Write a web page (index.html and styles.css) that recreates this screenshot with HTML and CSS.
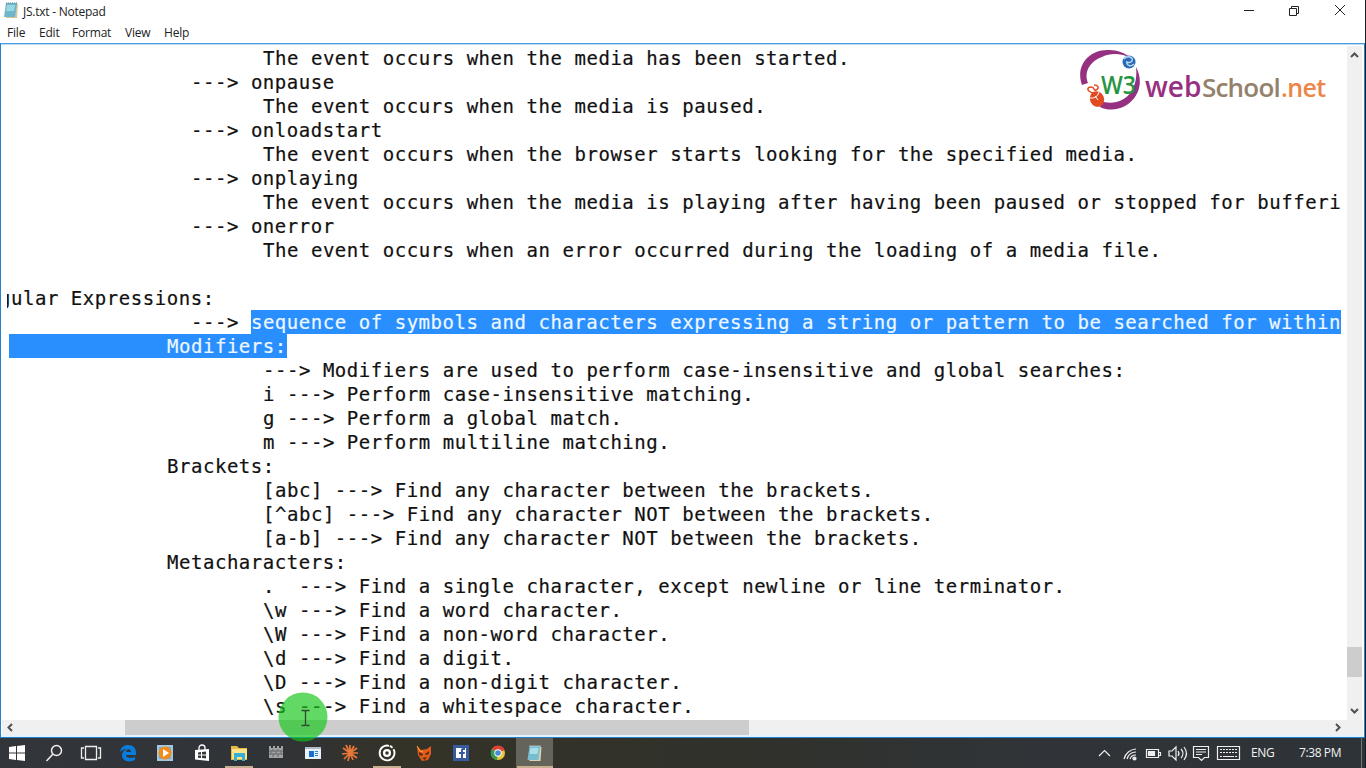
FILE: index.html
```html
<!DOCTYPE html>
<html lang="en">
<head>
<meta charset="utf-8">
<title>JS.txt - Notepad</title>
<link rel="stylesheet" href="styles.css">
</head>
<body>
<div class="screen">
  <header class="titlebar">
    <svg class="app-icon" width="16" height="17" viewBox="0 0 16 17"><path d="M4 2h11l-1 14H3z" fill="#d6c59a"/><path d="M3 1h11l-2 14H1z" fill="#6db6cb"/><path d="M4 3h8l-1 6H3z" fill="#9bd7e3"/><path d="M3 1h11" stroke="#657c83" stroke-dasharray="1 1"/></svg>
    <span class="title">JS.txt - Notepad</span>
    <svg class="controls" width="104" height="14" viewBox="0 0 104 14" fill="none" stroke="#222"><path d="M1 7.500h10"/><path d="M46.500 5.500h7v7h-7zM48.500 5.500v-2h7v7h-2M92 2l10 10M102 2L92 12"/></svg>
  </header>
  <nav class="menu"><span class="m1">File</span><span class="m2">Edit</span><span class="m3">Format</span><span class="m4">View</span><span class="m5">Help</span></nav>
  <main class="editor">
    <div class="page">
<pre class="text"><span class="line i3">The event occurs when the media has been started.</span><span class="line i2">---&gt; onpause</span><span class="line i3">The event occurs when the media is paused.</span><span class="line i2">---&gt; onloadstart</span><span class="line i3">The event occurs when the browser starts looking for the specified media.</span><span class="line i2">---&gt; onplaying</span><span class="line i3">The event occurs when the media is playing after having been paused or stopped for bufferi</span><span class="line i2">---&gt; onerror</span><span class="line i3">The event occurs when an error occurred during the loading of a media file.</span><span class="line"></span><span class="line i0">gular Expressions:</span><span class="line i2">---&gt; <span class="sel">sequence of symbols and characters expressing a string or pattern to be searched for within</span></span><span class="line"><span class="sel lead">Modifiers:</span></span><span class="line i3">---&gt; Modifiers are used to perform case-insensitive and global searches:</span><span class="line i3">i ---&gt; Perform case-insensitive matching.</span><span class="line i3">g ---&gt; Perform a global match.</span><span class="line i3">m ---&gt; Perform multiline matching.</span><span class="line i1">Brackets:</span><span class="line i3">[abc] ---&gt; Find any character between the brackets.</span><span class="line i3">[^abc] ---&gt; Find any character NOT between the brackets.</span><span class="line i3">[a-b] ---&gt; Find any character NOT between the brackets.</span><span class="line i1">Metacharacters:</span><span class="line i3">.  ---&gt; Find a single character, except newline or line terminator.</span><span class="line i3">\w ---&gt; Find a word character.</span><span class="line i3">\W ---&gt; Find a non-word character.</span><span class="line i3">\d ---&gt; Find a digit.</span><span class="line i3">\D ---&gt; Find a non-digit character.</span><span class="line i3">\s ---&gt; Find a whitespace character.</span></pre>
      <div class="vscroll"><svg width="15" height="20" viewBox="0 0 15 20"><path d="M4 11l3.500-3.500L11 11" fill="none" stroke="#505050" stroke-width="2"/></svg><i class="vthumb"></i><svg width="15" height="20" viewBox="0 0 15 20"><path d="M4 9l3.500 3.500L11 9" fill="none" stroke="#505050" stroke-width="2"/></svg></div>
    </div>
    <div class="hscroll"><svg width="16" height="15" viewBox="0 0 16 15"><path d="M10 4L6.500 7.500 10 11" fill="none" stroke="#505050" stroke-width="2"/></svg><i class="hthumb"></i><svg width="16" height="15" viewBox="0 0 16 15"><path d="M5 4l3.500 3.500L5 11" fill="none" stroke="#505050" stroke-width="2"/></svg></div>
  </main>
  <footer class="taskbar">
    <div class="apps">
      <span class="app"><svg width="18" height="18" viewBox="0 0 18 18" fill="#fff"><path d="M1 3l7-1v6.500H1zM9 2l8-1v7.500H9zM1 9.500h7V16l-7-1zM9 9.500h8V17l-8-1z"/></svg></span>
      <span class="app"><svg width="18" height="18" viewBox="0 0 18 18" fill="none" stroke="#eee" stroke-width="1.500"><circle cx="11.500" cy="6.500" r="5"/><path d="M8 10l-6.500 7"/></svg></span>
      <span class="app"><svg width="22" height="18" viewBox="0 0 22 18" fill="none" stroke="#eee" stroke-width="1.300"><path d="M5.500 2.500h11v13h-11zM4 4H1.500v10H4M18 4h2.500v10H18"/></svg></span>
      <span class="app"><svg width="18" height="18" viewBox="0 0 18 18"><path d="M1 8C2 3 5 1 9 1c5 0 8 3 8 8v2H7c0 3 5 4 9 2v3c-6 3-13 1-13-5 0-3 2-5 5-6C5 5 3 6 1 8zm6 0h5c0-3-4-4-5 0z" fill="#087ddd"/></svg></span>
      <span class="app"><svg width="18" height="18" viewBox="0 0 18 18"><path d="M1 1h16v16H1z" fill="#a5c6df"/><path d="M3 3h12v12H3z" fill="#7fa9c6"/><circle cx="9" cy="9" r="6.500" fill="#f28c16"/><path d="M7 5l6 4-6 4z" fill="#fff"/></svg></span>
      <span class="app"><svg width="18" height="18" viewBox="0 0 18 18"><path d="M2 6l14-1v12L2 15.500z" fill="#fff"/><path d="M6 6V4c0-4 6-4 6 0v2" fill="none" stroke="#fff" stroke-width="1.300"/><path d="M5 8.500l3-.4V10.500H5zM9 8l4-.5v3H9zM5 11.500h3v2.500l-3-.3zM9 11.500h4v3L9 14z" fill="#343638"/></svg></span>
      <span class="app open"><svg width="18" height="18" viewBox="0 0 18 18"><path d="M1 2h6l2 2h8v12H1z" fill="#e9b947"/><path d="M2 5h15v10H2z" fill="#ffe38b"/><path d="M4 9h11v8h-3v-4H7v4H4z" fill="#36afd5"/></svg></span>
      <span class="app"><svg width="18" height="18" viewBox="0 0 18 18"><path d="M2 2h2v2h2V2h2v2h2V2h2v2h2V2h2v12H2z" fill="#a2a2a2"/><path d="M2 7h14M2 10h14M6 5v2m5-2v2M4 7v3m5-3v3m5-3v3M6 10v3m5-3v3" stroke="#65676a"/></svg></span>
      <span class="app"><svg width="18" height="18" viewBox="0 0 18 18"><path d="M1 4h16v11H1z" fill="#e8f2fa"/><path d="M1 3h16v2H1z" fill="#aebdc8"/><path d="M5 7h5v6H5z" fill="#176fd1"/><path d="M11 7.500h3m-3 2h3m-3 2h3" stroke="#2b83cd"/></svg></span>
      <span class="app"><svg width="18" height="18" viewBox="0 0 18 18"><path d="M9 9L9 1M9 9l4-7M9 9l7-5M9 9h8M9 9l7 5M9 9l3 7M9 9l-2 8M9 9l-6 6M9 9l-8 1M9 9L2 4M9 9L5 1" stroke="#e87839" stroke-width="1.700"/></svg></span>
      <span class="app open"><svg width="18" height="18" viewBox="0 0 18 18" fill="none" stroke="#fff"><path d="M11 1.800A7.400 7.400 0 1 0 15.500 5.300" stroke-width="1.900"/><circle cx="9" cy="9" r="2.900" stroke-width="2.300"/><path d="M12 1.800l2.500 2" stroke-width="1.900"/></svg></span>
      <span class="app"><svg width="18" height="18" viewBox="0 0 18 18"><path d="M2 2l4 4 6-1 4-3v8l-3 6-6 1-4-6z" fill="#e45b19"/><path d="M4 8l4 2-1 2-3-1zM14 7l-4 3 1 1 3-1zM7 14l5-1-2 3z" fill="#542f1a"/><path d="M2 2l3 5 3 1" fill="none" stroke="#fcaf38"/></svg></span>
      <span class="app"><svg width="18" height="18" viewBox="0 0 18 18"><path d="M1 1h16v16H1z" fill="#385b9e"/><path d="M4 4h10v10H4z" fill="#fff"/><path d="M9 14v-4H7V8h2V6q0-2 2-2h2v2h-2v2h2l-.5 2H11v4z" fill="#385b9e"/></svg></span>
      <span class="app"><svg width="18" height="18" viewBox="0 0 18 18"><circle cx="9" cy="9" r="7" fill="#eec43a"/><path d="M9 9L3 5a7 7 0 0 1 12.500 1z" fill="#d94335"/><path d="M9 9L3 5a7 7 0 0 0 5 11z" fill="#349b50"/><circle cx="9" cy="9" r="3.700" fill="#fff"/><circle cx="9" cy="9" r="2.800" fill="#4b89d8"/></svg></span>
      <span class="app open active"><svg width="17" height="17" viewBox="0 0 16 17"><path d="M4 2h11l-1 14H3z" fill="#ddd2b1"/><path d="M3 1h11l-2 14H1z" fill="#78bdd0"/><path d="M4 3h8l-1 6H3z" fill="#a9dde7"/><path d="M3 1h11" stroke="#eee" stroke-dasharray="1 1"/></svg></span>
    </div>
    <div class="tray">
      <svg width="147" height="22" viewBox="0 0 147 22" fill="none" stroke="#eee" stroke-width="1.200"><path d="M4 14l5.500-5.500L15 14"/><path d="M29 17A13 13 0 0 1 41 7M32 17a9 9 0 0 1 9-7M35 17a6 6 0 0 1 6-4" /><circle cx="39.500" cy="16.500" r="1.500" fill="#eee"/><path d="M51.500 7.500h12v8h-12zM63.500 10.500h2v3h-2"/><path d="M53.500 9.500h6v4h-6z" fill="#eee"/><path d="M74 9h3l4-4v13l-4-4h-3zM83 9q2 2.500 0 5M86 7q4 4.500 0 9M89 5q5 6.500 0 13"/><path d="M98.500 4.500h15v11h-4l-3 3-3-3h-5zM101 7.500h10M101 10h10M101 12.500h6M122.500 4.500h22v13h-22z"/><path d="M125 7.500h17M125 10.500h17" stroke-dasharray="2 1"/><path d="M125 14.500h2m1 0h11m1 0h2"/></svg>
      <span class="lang">ENG</span><span class="time">7:38 PM</span><i class="peek"></i>
    </div>
  </footer>
  <div class="brand">
    <svg width="64" height="64" viewBox="0 0 64 64"><path d="M2 37C-5 18 9 1 29 2c9 0 16 3 22 8C42 6 32 4 22 9 8 14 4 26 8 35z" fill="#963080"/><path d="M56 19c8 15 3 31-11 39-7 4-17 5-25 1v-6c12 4 24 1 31-9 5-8 6-16 5-25z" fill="#963080"/><circle cx="49" cy="14" r="6.500" fill="#2869b5"/><path d="M44 11c5-5 11 0 7 3l-4 1m0-2c-1 5 4 6 7 3" fill="none" stroke="#b4d7f4" stroke-width="1.500"/><ellipse cx="17" cy="51" rx="7" ry="8" fill="#e24b21" transform="rotate(-25 17 51)"/><path d="M13 45c-7-2-6-6-2-6s2 4 5 3c4-2 2-5-2-5" fill="none" stroke="#e24b21" stroke-width="1.600"/><path d="M10 50q7 1 9-6M15 48l3 4" fill="none" stroke="#fff"/><text class="w3" x="21" y="46" textLength="35" lengthAdjust="spacingAndGlyphs">W3</text></svg>
    <div class="name"><span class="web">web</span><span class="school">School</span><span class="net">.net</span></div>
  </div>
  <svg class="pointer" width="50" height="50" viewBox="0 0 50 50"><circle cx="25" cy="25" r="24.500" fill="#15c51a" fill-opacity=".67"/><path d="M23.500 18.500h3l1 1 1-1h3M23.500 33.500h3l1-1 1 1h3M27.500 19v14" fill="none" stroke="#304b31" stroke-width="1.300"/></svg>
</div>
</body>
</html>
```

FILE: styles.css
```css
* { box-sizing: border-box; }
body { margin: 0; overflow: hidden; background: #fff; font-family: "Open Sans", "Noto Sans", sans-serif; }
.screen { position: relative; width: 1366px; height: 768px; display: flex; flex-direction: column; overflow: hidden; border-right: 1px solid #15202a; }
svg { display: block; flex: none; }
.titlebar { display: flex; height: 23px; padding: 2px 18px 0 3px; font-size: 12px; line-height: 19px; color: #222; }
.title { margin-left: 4px; letter-spacing: -.25px; }
.controls { margin: 1px 0 0 auto; }
.menu { display: flex; height: 20px; padding-left: 7px; font-size: 12px; line-height: 19px; letter-spacing: -.2px; color: #222; }
.m1 { width: 32px; }
.m2 { width: 33px; }
.m3 { width: 53px; }
.m4 { width: 39px; }
.editor { height: 695px; border: 1px solid #2382d0; border-top-color: #4e9de0; box-shadow: inset 0 1px #b9daf5, inset 0 -2px #e4f4ff; width: 1365px; padding: 2px 1px 2px 1px; display: flex; flex-direction: column; }
.page { height: 674px; display: flex; }
.text { margin: 0; width: 1345px; height: 674px; overflow: hidden; font: 19px/24px "DejaVu Sans Mono", monospace; letter-spacing: .54px; color: #111; padding-left: 7px; -webkit-text-stroke: .2px; }
.line { display: block; height: 24px; width: 1334px; overflow: hidden; white-space: pre; }
.i0 { text-indent: -10px; margin-left: -2px; padding-left: 2px; }
.i1 { padding-left: 158px; }
.i2 { padding-left: 182px; }
.i3 { padding-left: 254px; }
.sel { display: inline-block; height: 24px; background: #298fff; color: #eef7ff; }
.lead { padding-left: 158px; }
.vscroll { width: 15px; background: #f0f0f0; display: flex; flex-direction: column; justify-content: space-between; }
.vthumb { height: 30px; background: #cdcdcd; margin-top: 581px; margin-bottom: 23px; }
.hscroll { height: 15px; background: #f0f0f0; display: flex; }
.hthumb { width: 624px; margin-left: 107px; background: #cdcdcd; }
.hscroll svg:last-child { margin-left: auto; margin-right: 16px; }
.taskbar { height: 30px; background: linear-gradient(90deg, #32363b, #303338 20%, #343328 29%, #30312b 55%, #303438 75%, #2e3338); display: flex; justify-content: space-between; color: #f2f2f2; }
.apps { display: flex; margin-left: -1px; }
.app { width: 36.950px; height: 30px; display: grid; place-items: center; }
.open { background: linear-gradient(#c7b090, #c7b090) center bottom / 28px 2px no-repeat; }
.active { background-color: #65645b; background-size: 36px 2px; }
.tray { display: flex; align-items: center; font-size: 12px; padding-bottom: 1px; }
.tray svg { margin-right: 9px; margin-top: 1px; }
.lang { width: 48px; letter-spacing: -.3px; }
.time { width: 62px; letter-spacing: -.4px; }
.peek { width: 4px; height: 30px; border-left: 1px solid #777; }
.brand { position: absolute; left: 1080px; top: 48px; display: flex; }
.name { display: flex; align-items: baseline; margin: 19px 0 0 1px; font-family: "Open Sans", sans-serif; line-height: 38px; white-space: nowrap; }
.w3 { font: 600 25px "Open Sans", sans-serif; fill: #269542; }
.web { width: 57px; font-size: 28px; font-weight: 600; color: #963080; }
.school { width: 79px; font-size: 26px; font-weight: 600; letter-spacing: -.8px; color: #94816b; }
.net { font-size: 25px; font-weight: 600; letter-spacing: -.6px; color: #ec8548; }
.pointer { position: absolute; left: 278px; top: 692px; }
```
